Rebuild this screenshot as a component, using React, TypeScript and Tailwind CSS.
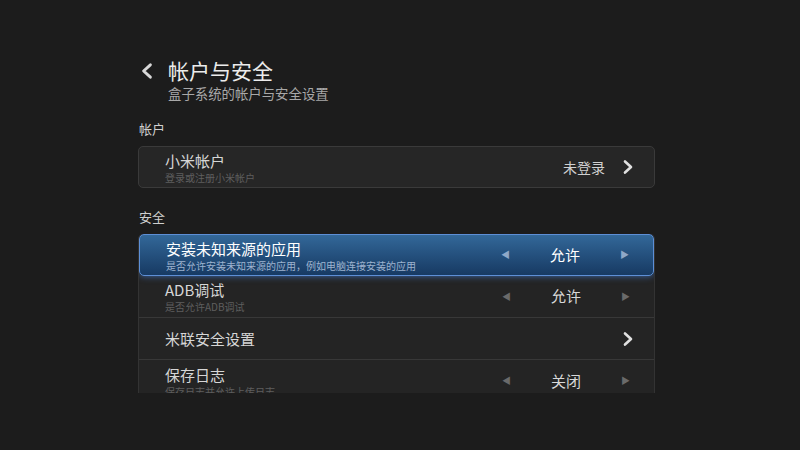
import React from 'react';

const font = { fontFamily: '"Noto Sans CJK SC", "Noto Sans", sans-serif' };

function Chevron({ className }: { className?: string }) {
  return (
    <svg viewBox="0 0 12 16" className={className} fill="none">
      <path d="M3 2.5 L9 8 L3 13.5" stroke="currentColor" strokeWidth="2.6" strokeLinecap="round" strokeLinejoin="round" />
    </svg>
  );
}

function Picker({ value, active }: { value: string; active?: boolean }) {
  return (
    <div className="flex items-center w-[156px] justify-between pr-[24px] pl-[4px]">
      <span className={`text-[9px] ${active ? 'text-[#8fa8c8]' : 'text-[#6a6a6a]'}`}>◀</span>
      <span className={`text-[15px] ${active ? 'text-white' : 'text-[#d8d8d8]'}`}>{value}</span>
      <span className={`text-[9px] ${active ? 'text-[#8fa8c8]' : 'text-[#6a6a6a]'}`}>▶</span>
    </div>
  );
}

function Row({
  title,
  sub,
  right,
  active,
  last,
}: {
  title: string;
  sub?: string;
  right: React.ReactNode;
  active?: boolean;
  last?: boolean;
}) {
  return (
    <div
      className={
        active
          ? 'h-[42px] flex items-center justify-between pl-[26px] rounded-[5px] border border-[#5d8fd6] bg-gradient-to-b from-[#336899] to-[#173a63] shadow-[0_0_7px_rgba(70,130,220,0.75)]'
          : `h-[42px] flex items-center justify-between pl-[26px] ${last ? '' : 'border-b border-[#383838]'}`
      }
    >
      <div className="flex flex-col">
        <span className={`text-[15px] leading-[20px] ${active ? 'text-white' : 'text-[#d6d6d6]'}`}>{title}</span>
        {sub && (
          <span className={`text-[10px] leading-[13px] ${active ? 'text-[#9db3cf]' : 'text-[#5e5e5e]'}`}>{sub}</span>
        )}
      </div>
      {right}
    </div>
  );
}

export default function App() {
  return (
    <div className="w-[800px] h-[450px] bg-[#1c1c1c] overflow-hidden" style={font}>
      <div className="ml-[138px] w-[517px] pt-[57px]">
        <div className="flex items-start">
          <Chevron className="w-[14px] h-[18px] mt-[5px] ml-[2px] text-[#d8d8d8] rotate-180" />
          <div className="ml-[14px] flex flex-col">
            <span className="text-[21px] leading-[27px] text-[#ececec]">帐户与安全</span>
            <span className="text-[13.4px] leading-[18px] text-[#a8a8a8]">盒子系统的帐户与安全设置</span>
          </div>
        </div>

        <div className="mt-[18px] text-[13px] leading-[18px] text-[#cfcfcf] pl-[1px]">帐户</div>
        <div className="mt-[8px] h-[42px] rounded-[5px] border border-[#3a3a3a] bg-[#262626] flex items-center justify-between pl-[26px] pr-[20px]">
          <div className="flex flex-col">
            <span className="text-[15px] leading-[20px] text-[#d6d6d6]">小米帐户</span>
            <span className="text-[10px] leading-[13px] text-[#5e5e5e]">登录或注册小米帐户</span>
          </div>
          <div className="flex items-center">
            <span className="text-[14px] text-[#d0d0d0]">未登录</span>
            <Chevron className="w-[12px] h-[16px] ml-[17px] text-[#e0e0e0]" />
          </div>
        </div>

        <div className="mt-[20px] text-[13px] leading-[18px] text-[#cfcfcf] pl-[1px]">安全</div>
        <div className="mt-[8px] h-[159px] overflow-hidden rounded-t-[5px] bg-[#242424] border-x border-[#333]">
          <Row title="安装未知来源的应用" sub="是否允许安装未知来源的应用，例如电脑连接安装的应用" right={<Picker value="允许" active />} active />
          <Row title="ADB调试" sub="是否允许ADB调试" right={<Picker value="允许" />} />
          <Row
            title="米联安全设置"
            right={<Chevron className="w-[12px] h-[16px] mr-[20px] text-[#e0e0e0]" />}
          />
          <Row title="保存日志" sub="保存日志并允许上传日志" right={<Picker value="关闭" />} last />
        </div>
      </div>
    </div>
  );
}
